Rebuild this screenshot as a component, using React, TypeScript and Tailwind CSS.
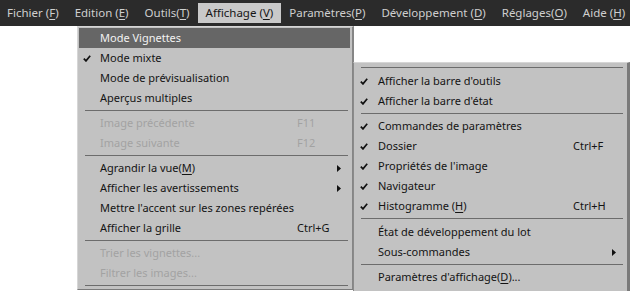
import React from 'react';

const font = { fontFamily: '"Noto Sans", "Open Sans", sans-serif' };

type Row =
  | { sep: true; h?: 5 | 6 | 7 }
  | {
      sep?: false;
      label: React.ReactNode;
      check?: boolean;
      shortcut?: string;
      arrow?: boolean;
      disabled?: boolean;
      active?: boolean;
    };

function U({ children }: { children: React.ReactNode }) {
  return <span className="underline underline-offset-2">{children}</span>;
}

function Check() {
  return (
    <svg width="8" height="7" viewBox="0 0 8 7" className="block">
      <path d="M0.8 3.6 L3 5.9 L7.2 0.8" fill="none" stroke="#111" strokeWidth="1.7" />
    </svg>
  );
}

function Arrow() {
  return (
    <svg width="4" height="7" viewBox="0 0 4 7" className="block">
      <path d="M0 0 L4 3.5 L0 7 Z" fill="#111" />
    </svg>
  );
}

const leftRows: Row[] = [
  { label: 'Mode Vignettes', active: true },
  { label: 'Mode mixte', check: true },
  { label: 'Mode de prévisualisation' },
  { label: 'Aperçus multiples' },
  { sep: true },
  { label: 'Image précédente', shortcut: 'F11', disabled: true },
  { label: 'Image suivante', shortcut: 'F12', disabled: true },
  { sep: true },
  { label: <>Agrandir la vue(<U>M</U>)</>, arrow: true },
  { label: 'Afficher les avertissements', arrow: true },
  { label: "Mettre l'accent sur les zones repérées" },
  { label: 'Afficher la grille', shortcut: 'Ctrl+G' },
  { sep: true },
  { label: 'Trier les vignettes...', disabled: true },
  { label: 'Filtrer les images...', disabled: true },
  { sep: true },
];

const rightRows: Row[] = [
  { sep: true, h: 6 },
  { label: "Afficher la barre d'outils", check: true },
  { label: "Afficher la barre d'état", check: true },
  { sep: true },
  { label: 'Commandes de paramètres', check: true },
  { label: 'Dossier', check: true, shortcut: 'Ctrl+F' },
  { label: "Propriétés de l'image", check: true },
  { label: 'Navigateur', check: true },
  { label: <>Histogramme (<U>H</U>)</>, check: true, shortcut: 'Ctrl+H' },
  { sep: true, h: 6 },
  { label: 'État de développement du lot' },
  { label: 'Sous-commandes', arrow: true },
  { sep: true },
  { label: <>Paramètres d'affichage(<U>D</U>)...</> },
];

function MenuRows({ rows, checkCol, textCol }: { rows: Row[]; checkCol: string; textCol: string }) {
  return (
    <>
      {rows.map((r, i) =>
        r.sep ? (
          <div key={i} className={`pl-[6px] pr-[2px] pt-[2px] ${r.h === 6 ? 'h-[6px]' : 'h-[5px]'}`}>
            <div className="h-px w-full bg-[#6c6c6c]" />
          </div>
        ) : (
          <div
            key={i}
            className={`flex h-[20px] items-center pt-px ${
              r.active ? 'bg-[#666666] text-[#f2f2f2]' : r.disabled ? 'text-[#a2a2a2]' : 'text-[#141414]'
            }`}
          >
            <div className={`flex ${checkCol} shrink-0 justify-center pr-[6px]`}>{r.check && <Check />}</div>
            <div className={`${textCol} shrink-0 whitespace-nowrap`}>{r.label}</div>
            <div className="flex-1 whitespace-nowrap">{r.shortcut}</div>
            {r.arrow && (
              <div className="mr-[9px]">
                <Arrow />
              </div>
            )}
          </div>
        )
      )}
    </>
  );
}

export default function App() {
  const bar: React.ReactNode[] = [
    <>Fichier (<U>F</U>)</>,
    <>Edition (<U>E</U>)</>,
    <>Outils(<U>T</U>)</>,
    <>Affichage (<U>V</U>)</>,
    <>Paramètres(<U>P</U>)</>,
    <>Développement (<U>D</U>)</>,
    <>Réglages(<U>O</U>)</>,
    <>Aide (<U>H</U>)</>,
  ];

  return (
    <div className="relative h-[291px] w-[630px] overflow-hidden bg-white text-[11px]" style={font}>
      <div className="flex h-[26px] items-center bg-[#2b2b2b] pb-px text-[11.5px]">
        {bar.map((b, i) => (
          <div
            key={i}
            className={`flex h-[20px] items-center whitespace-nowrap px-[8px] ${i === 0 ? '-ml-px' : ''} ${
              i === 3 ? 'bg-[#c9c9c9] text-[#161616]' : 'text-[#cfcfcf]'
            }`}
          >
            {b}
          </div>
        ))}
      </div>

      {/* Affichage dropdown */}
      <div className="absolute left-[77px] top-[26px] w-[277px] border-b border-l border-r-2 border-t border-b-[#7a7a7a] border-l-[#d6d6d6] border-r-[#858585] border-t-[#d6d6d6] bg-[#c2c2c2] py-px pl-px pr-[2px]">
        <MenuRows rows={leftRows} checkCol="w-[21px]" textCol="w-[197px]" />
      </div>

      {/* sub menu */}
      <div className="absolute left-[353px] top-[62px] w-[277px] border-l border-r-[3px] border-t border-l-[#8a8a8a] border-r-[#7a7a7a] border-t-[#d6d6d6] bg-[#c2c2c2] pb-[4px] pl-px pr-[2px] pt-[2px]">
        <MenuRows rows={rightRows} checkCol="w-[23px]" textCol="w-[195px]" />
      </div>
    </div>
  );
}
